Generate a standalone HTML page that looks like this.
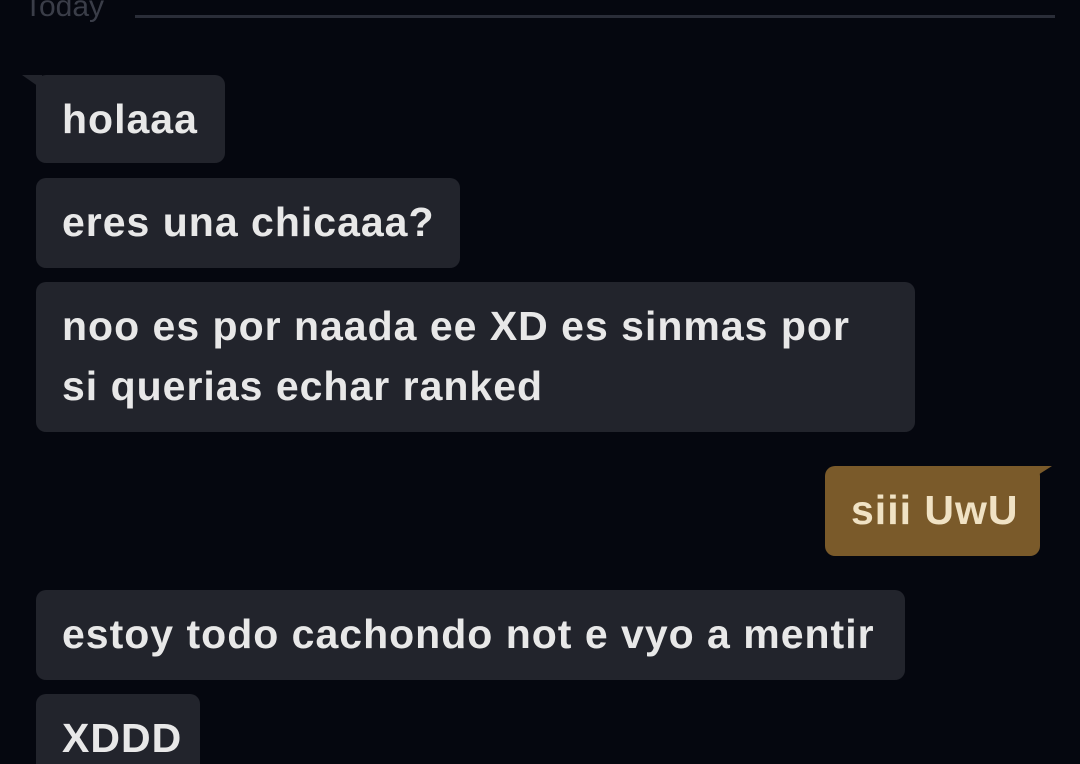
<!DOCTYPE html><html><head><style>
html,body{margin:0;width:1080px;height:764px;overflow:hidden}
body{background:#05070f;position:relative;font-family:"Liberation Sans",sans-serif}
.b{position:absolute;background:#22242c;border-radius:10px;color:#e8e8e8;font-weight:bold;font-size:41px;line-height:60px;padding:14px 26px;box-sizing:border-box;letter-spacing:1px;white-space:nowrap;transform-origin:left top}
.tail{position:absolute;width:0;height:0}
</style></head><body>
<div style="position:absolute;left:24px;top:-10px;color:#3a3d48;font-size:30px">Today</div>
<div style="position:absolute;left:135px;top:15px;width:920px;height:3px;background:#2a2d38"></div>
<div class="b" style="left:36px;top:75px;width:189px;height:88px">holaaa</div>
<div class="tail" style="left:22px;top:75px;border-top:14px solid #22242c;border-left:20px solid transparent"></div>
<div class="b" style="left:36px;top:178px;width:424px;height:90px">eres una chicaaa?</div>
<div class="b" style="left:36px;top:282px;width:879px;height:150px;line-height:60px">noo es por naada ee XD es sinmas por<br>si querias echar ranked</div>
<div class="b" style="left:825px;top:466px;width:215px;height:90px;background:#7a5a2a;color:#f0e2c4">siii UwU</div>
<div class="tail" style="left:1030px;top:466px;border-top:14px solid #7a5a2a;border-right:22px solid transparent"></div>
<div class="b" style="left:36px;top:590px;width:869px;height:90px">estoy todo cachondo not e vyo a mentir</div>
<div class="b" style="left:36px;top:694px;width:164px;height:90px">XDDD</div>
</body></html>
